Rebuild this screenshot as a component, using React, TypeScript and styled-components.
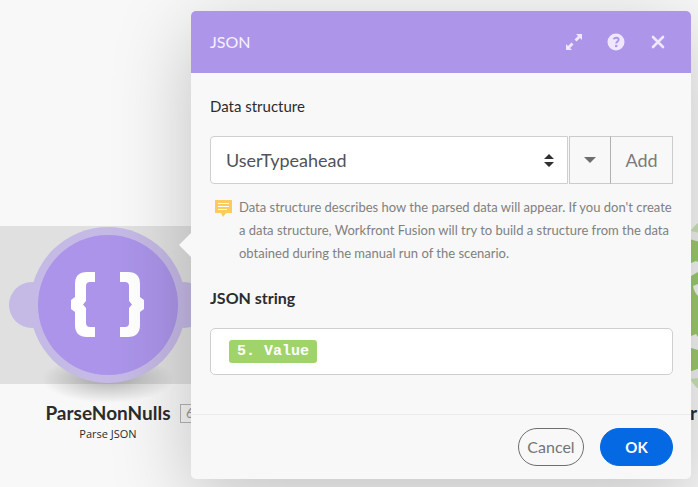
import React from "react";
import styled, { createGlobalStyle } from "styled-components";

const GlobalStyle = createGlobalStyle`
  *, *::before, *::after { box-sizing: border-box; }
  html, body, #root { height: 100%; }
  body { margin: 0; background: #f8f8f8; color: #2c2c2c; font: 16px/24px Lato, "Noto Sans", sans-serif; }
  button, select { font-family: inherit; margin: 0; cursor: pointer; }
`;

const Page = styled.div`
  position: relative;
  min-height: 100%;
  padding: 11px 7px 8px 191px;
  overflow: hidden;
`;

const Canvas = styled.div`
  position: absolute;
  inset: 0;
  overflow: hidden;
`;

const Band = styled.div`
  position: absolute;
  top: 226px;
  left: 0;
  width: 240px;
  height: 158px;
  background: #e0e0e0;
`;

const Drawing = styled.svg<{ $left: number }>`
  position: absolute;
  top: 215px;
  left: ${(p) => p.$left}px;
`;

const NodeCaption = styled.div<{ $end?: boolean }>`
  position: absolute;
  top: 402px;
  ${(p) => (p.$end ? "right: 1px;" : "left: 0; width: 216px;")}
  text-align: center;
`;

const NodeName = styled.div`
  position: relative;
  font: 700 19px/22px Lato, sans-serif;
  white-space: nowrap;
`;

const NodeKind = styled.div`
  font: 11px/20px "Open Sans", sans-serif;
`;

const Count = styled.span`
  position: absolute;
  top: 2px;
  left: 180px;
  padding: 0 5px;
  border: 1px solid #b4b4b4;
  color: #9a9a9a;
  font-weight: 400;
  font-size: 13px;
  line-height: 17px;
`;

const Dialog = styled.section`
  position: relative;
  border-radius: 5px;
  background: #f8f8f8;
  box-shadow: 0 20px 80px rgba(0, 0, 0, 0.22);

  &::before {
    content: "";
    position: absolute;
    top: 222px;
    left: -12px;
    border: 12px solid transparent;
    border-left-width: 0;
    border-right-color: #f8f8f8;
  }
`;

const Header = styled.header`
  display: flex;
  align-items: center;
  height: 62px;
  padding: 0 18px 0 19px;
  border-radius: 5px 5px 0 0;
  background: #ad96ea;
  color: #f7f2ff;
`;

const Title = styled.h1`
  flex: 1;
  margin: 0;
  font: 400 16px/24px Lato, sans-serif;
`;

const HeaderActions = styled.div`
  display: flex;
  gap: 12px;
`;

const IconButton = styled.button`
  display: grid;
  place-items: center;
  width: 30px;
  height: 30px;
  padding: 0;
  border: 0;
  background: none;
  color: #efe6ff;
`;

const Body = styled.div`
  padding: 21px 18px 39px 19px;
`;

const Label = styled.label<{ $strong?: boolean }>`
  display: block;
  width: fit-content;
  font: ${(p) => (p.$strong ? "700 16px" : "400 15px")}/24px Lato, sans-serif;
`;

const SelectRow = styled.div`
  display: flex;
  height: 48px;
  margin-top: 18px;
`;

const SelectBox = styled.div`
  position: relative;
  flex: 1;
  min-width: 0;

  svg {
    position: absolute;
    top: 18px;
    right: 14px;
    pointer-events: none;
  }
`;

const Select = styled.select`
  appearance: none;
  width: 100%;
  height: 100%;
  padding: 0 36px 0 15px;
  border: 1px solid #cfcfcf;
  border-radius: 4px 0 0 4px;
  background: #fff;
  color: #505357;
  font: 18px/24px Lato, sans-serif;
`;

const SideButton = styled.button<{ $gap?: boolean }>`
  display: flex;
  align-items: center;
  justify-content: center;
  min-width: ${(p) => (p.$gap ? 42 : 62)}px;
  margin-left: ${(p) => (p.$gap ? 1 : 0)}px;
  padding: 0;
  border: 1px solid #cbcbcb;
  border-right-color: ${(p) => (p.$gap ? "#b0b0b0" : "#cbcbcb")};
  border-left-width: ${(p) => (p.$gap ? 1 : 0)}px;
  background: #f8f8f8;
  color: #7b7b7b;
  font: 18px/24px Lato, sans-serif;
`;

const Hint = styled.div`
  display: flex;
  gap: 7px;
  margin: 12px 0 0 5px;

  svg { flex: none; margin-top: 4px; }
`;

const HintText = styled.p`
  margin: 0;
  color: #808080;
  font: 13px/23px Lato, sans-serif;
`;

const FieldGroup = styled.div`
  margin-top: 21px;
`;

const TokenField = styled.div`
  display: flex;
  align-items: center;
  height: 47px;
  margin-top: 18px;
  padding: 0 18px;
  border: 1px solid #cfcfcf;
  border-radius: 5px;
  background: #fff;
`;

const Token = styled.span`
  padding: 0 8px;
  border-radius: 3px;
  background: #a0d46b;
  color: #fff;
  font: 700 15px/23px "Liberation Mono", monospace;
`;

const Footer = styled.footer`
  display: flex;
  justify-content: flex-end;
  gap: 16px;
  padding: 13px 18px;
  border-top: 1px solid #ececec;
`;

const PillButton = styled.button<{ $primary?: boolean }>`
  min-width: ${(p) => (p.$primary ? 73 : 66)}px;
  height: 38px;
  padding: 0 8px;
  border: 1px solid ${(p) => (p.$primary ? "#0469e3" : "#6e6e6e")};
  border-radius: 19px;
  background: ${(p) => (p.$primary ? "#0469e3" : "#f8f8f8")};
  color: ${(p) => (p.$primary ? "#fff" : "#747474")};
  font: ${(p) => (p.$primary ? "700 15px" : "400 16px")}/24px Lato, sans-serif;
`;

function JsonNode() {
  return (
    <Drawing $left={0} width="240" height="190" viewBox="0 215 240 190" aria-hidden="true">
      <defs>
        <radialGradient id="ground">
          <stop offset="0" stopColor="#000" stopOpacity=".28" />
          <stop offset="1" stopColor="#000" stopOpacity="0" />
        </radialGradient>
      </defs>
      <ellipse cx="108" cy="379" rx="66" ry="24" fill="url(#ground)" />
      <g fill="#c5b9e5">
        <circle cx="32" cy="305" r="23" />
        <circle cx="184" cy="305" r="23" />
        <circle cx="108" cy="305" r="78" />
      </g>
      <circle cx="108" cy="305" r="70" fill="#ab94e9" />
      <g fill="#fff">
        <path d="M95 272v10h-5q-4 0-4 4v15l-3 3.500l3 3.500v15q0 4 4 4h5v10h-8q-12 0-12-12v-13l-4-3v-9l4-3v-13q0-12 12-12z" />
        <path d="M120 272v10h5q4 0 4 4v15l3 3.500l-3 3.500v15q0 4-4 4h-5v10h8q12 0 12-12v-13l4-3v-9l-4-3v-13q0-12-12-12z" />
      </g>
    </Drawing>
  );
}

function GreenNode() {
  return (
    <Drawing $left={686} width="80" height="190" viewBox="686 215 80 190" aria-hidden="true">
      <path d="M686 238Q691 228 700 221L766 205V405L700 390Q694 387 686 372z" fill="#cbe3b6" />
      <path d="M686 230L700 233V378L686 379z" fill="#f0f0f0" />
      <path d="M686 238L700 242V368L686 373z" fill="#9acb6c" />
      <g fill="#f4f4f4">
        <path d="M686 264l5-1 5-2 2 1v10l-7 4h-5z" />
        <path d="M693 286l5-2v12q-4-4-5-10z" />
        <path d="M686 337l5-1 5-2 2 3v13l-7-2h-5z" />
      </g>
    </Drawing>
  );
}

export default function App() {
  return (
    <>
      <GlobalStyle />
      <Page>
        <Canvas>
          <Band />
          <JsonNode />
          <NodeCaption>
            <NodeName>ParseNonNulls<Count>6</Count></NodeName>
            <NodeKind>Parse JSON</NodeKind>
          </NodeCaption>
          <GreenNode />
          <NodeCaption $end>
            <NodeName>r</NodeName>
          </NodeCaption>
        </Canvas>
        <Dialog role="dialog" aria-labelledby="dialog-title">
          <Header>
            <Title id="dialog-title">JSON</Title>
            <HeaderActions>
              <IconButton aria-label="Expand">
                <svg width="18" height="18" viewBox="0 0 18 18" fill="currentColor">
                  <path d="M11 1h6v6l-2-2-3.500 3.500-2-2L13 3zM1 11l2 2 3.500-3.500 2 2L5 15l2 2H1z" />
                </svg>
              </IconButton>
              <IconButton aria-label="Help">
                <svg width="18" height="18" viewBox="0 0 18 18">
                  <circle cx="9" cy="9" r="8.500" fill="currentColor" />
                  <path d="M6.500 6.200q1-1.400 2.700-1.400c1.600 0 2.400.8 2.400 1.900 0 1.900-2.400 1.900-2.400 3.900" fill="none" stroke="#ad96ea" strokeWidth="1.900" />
                  <circle cx="9.200" cy="13" r="1.300" fill="#ad96ea" />
                </svg>
              </IconButton>
              <IconButton aria-label="Close">
                <svg width="18" height="18" viewBox="0 0 18 18" fill="none" stroke="currentColor" strokeWidth="2.600" strokeLinecap="round">
                  <path d="M4 4l10 10M14 4L4 14" />
                </svg>
              </IconButton>
            </HeaderActions>
          </Header>
          <Body>
            <Label htmlFor="structure">Data structure</Label>
            <SelectRow>
              <SelectBox>
                <Select id="structure" defaultValue="UserTypeahead">
                  <option>UserTypeahead</option>
                </Select>
                <svg width="10" height="13" viewBox="0 0 10 13" fill="#2e3033" aria-hidden="true">
                  <path d="M5 0l5 5H0zM5 13l5-5H0z" />
                </svg>
              </SelectBox>
              <SideButton $gap aria-label="More options">
                <svg width="12" height="6" viewBox="0 0 12 6" fill="#6e6e6e" aria-hidden="true">
                  <path d="M0 0h12L6 6z" />
                </svg>
              </SideButton>
              <SideButton>Add</SideButton>
            </SelectRow>
            <Hint>
              <svg width="17" height="17" viewBox="0 0 17 17" aria-hidden="true">
                <path d="M0 0h17v13h-6l-3 4-2-4H0z" fill="#fbcb5b" />
                <path d="M3 3.500h11M3 6.500h11M3 9.500h9" stroke="#fff" strokeWidth="1" />
              </svg>
              <HintText>
                Data structure describes how the parsed data will appear. If you don't create a data
                structure, Workfront Fusion will try to build a structure from the data obtained
                during the manual run of the scenario.
              </HintText>
            </Hint>
            <FieldGroup>
              <Label as="div" id="json-label" $strong>JSON string</Label>
              <TokenField role="textbox" aria-labelledby="json-label" tabIndex={0}>
                <Token>5. Value</Token>
              </TokenField>
            </FieldGroup>
          </Body>
          <Footer>
            <PillButton>Cancel</PillButton>
            <PillButton $primary>OK</PillButton>
          </Footer>
        </Dialog>
      </Page>
    </>
  );
}
